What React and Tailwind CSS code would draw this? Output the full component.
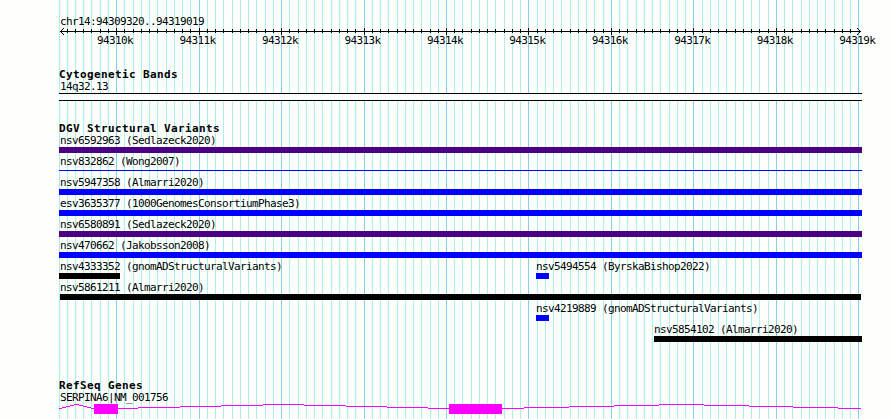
import React from 'react';

const LEFT = 59;
const STEP = 800 / 97;

// one grid line per 100 bp, a major one per 1 kb
const grid = Array.from({ length: 98 }, (_, i) => ({
  x: Math.max(LEFT, Math.floor(58.87 + i * STEP)),
  major: i % 10 === 7,
}));

const scaleLabels = [
  '94310k', '94311k', '94312k', '94313k', '94314k',
  '94315k', '94316k', '94317k', '94318k', '94319k',
];

const INDIGO = 'bg-[#4b0082]';
const BLUE = 'bg-[#0000ff]';
const BLACK = 'bg-black';

const variants = [
  [{ name: 'nsv6592963 (Sedlazeck2020)', start: 59, end: 862, color: INDIGO }],
  [{ name: 'nsv832862 (Wong2007)', start: 59, end: 862, color: BLUE, thin: true }],
  [{ name: 'nsv5947358 (Almarri2020)', start: 59, end: 862, color: BLUE }],
  [{ name: 'esv3635377 (1000GenomesConsortiumPhase3)', start: 59, end: 862, color: BLUE }],
  [{ name: 'nsv6580891 (Sedlazeck2020)', start: 59, end: 862, color: INDIGO }],
  [{ name: 'nsv470662 (Jakobsson2008)', start: 59, end: 862, color: BLUE }],
  [
    { name: 'nsv4333352 (gnomADStructuralVariants)', start: 59, end: 120, color: BLACK },
    { name: 'nsv5494554 (ByrskaBishop2022)', start: 536, end: 549, color: BLUE },
  ],
  [{ name: 'nsv5861211 (Almarri2020)', start: 60, end: 861, color: BLACK }],
  [{ name: 'nsv4219889 (gnomADStructuralVariants)', start: 536, end: 549, color: BLUE }],
  [{ name: 'nsv5854102 (Almarri2020)', start: 654, end: 862, color: BLACK }],
];

// [x1, x2, y] runs of the intron line, y from the top of the gene glyph
const introns = [
  [59, 62, 4], [62, 66, 3], [66, 70, 2], [70, 74, 1], [74, 79, 0],
  [79, 83, 1], [83, 87, 2], [87, 91, 3], [91, 94, 4],
  [118, 138, 4], [138, 180, 3], [180, 221, 2], [221, 263, 1], [263, 304, 0],
  [304, 346, 1], [346, 387, 2], [387, 428, 3], [428, 449, 4],
  [502, 524, 4], [524, 569, 3], [569, 614, 2], [614, 659, 1], [659, 704, 0],
  [704, 749, 1], [749, 793, 2], [793, 838, 3], [838, 861, 4],
];

const exons = [[94, 118], [449, 502]];

const Label = ({ children }) => (
  <div className="h-3 whitespace-pre text-[11px] leading-[12px] tracking-[-0.622px]">{children}</div>
);

const Title = ({ children }) => (
  <h2 className="h-3 whitespace-pre text-[11px] font-bold leading-[12px] tracking-[0.378px]">{children}</h2>
);

const Grid = () => (
  <svg className="absolute inset-0" width="890" height="419" shapeRendering="crispEdges">
    {grid.map((g) => (
      <rect key={g.x} x={g.x} y="0" width="1" height="419" fill={g.major ? '#87ceeb' : '#afeeee'} />
    ))}
  </svg>
);

const Axis = () => (
  <svg className="block" width="890" height="7" shapeRendering="crispEdges">
    <rect x="60" y="3" width="801" height="1" />
    {grid.slice(1, -1).map((g) => (
      <rect key={g.x} x={g.x} y={g.major ? 0 : 1} width="1" height={g.major ? 7 : 4} />
    ))}
    {[1, 2, 3].map((d) => (
      <g key={d}>
        <rect x={60 + d} y={3 - d} width="1" height="1" />
        <rect x={60 + d} y={3 + d} width="1" height="1" />
        <rect x={860 - d} y={3 - d} width="1" height="1" />
        <rect x={860 - d} y={3 + d} width="1" height="1" />
      </g>
    ))}
  </svg>
);

const Feature = ({ feature, offset }) => (
  <div className="w-0 shrink-0" style={{ marginLeft: feature.start - offset }}>
    <div className={`h-[15px] pt-[3px] ${feature.start === LEFT ? 'pl-px' : ''}`}>
      <Label>{feature.name}</Label>
    </div>
    <div
      className={`${feature.thin ? 'mt-[2px] h-px' : 'h-1.5'} ${feature.color}`}
      style={{ width: feature.end - feature.start }}
    />
  </div>
);

const Gene = () => (
  <svg className="block" width="890" height="10" shapeRendering="crispEdges" fill="#ff00ff">
    {introns.map(([x1, x2, y]) => (
      <rect key={x1} x={x1} y={y} width={x2 - x1} height="1" />
    ))}
    {exons.map(([x1, x2]) => (
      <rect key={x1} x={x1} y="0" width={x2 - x1} height="10" />
    ))}
  </svg>
);

const App = () => (
  <div className="relative h-[419px] w-[890px] overflow-hidden bg-[#fdfffc] font-['DejaVu_Sans_Mono',monospace] text-black">
    <Grid />
    <div className="relative flex flex-col">
      <header className="h-[69px] pt-4">
        <div className="pl-[60px]">
          <Label>chr14:94309320..94319019</Label>
        </div>
        <Axis />
        <div className="flex pl-[97px]">
          {scaleLabels.map((label) => (
            <div key={label} className="w-[82.47px] shrink-0">
              <Label>{label}</Label>
            </div>
          ))}
        </div>
      </header>

      <section className="h-[54px] pl-[59px]">
        <Title>Cytogenetic Bands</Title>
        <div className="pl-px">
          <Label>14q32.13</Label>
        </div>
        <div className="h-2 w-[803px] border-y border-black bg-[#fdfffc]" />
      </section>

      <section className="h-[257px]">
        <div className="pl-[59px]">
          <Title>DGV Structural Variants</Title>
        </div>
        <div className="-mt-[3px]">
          {variants.map((row) => (
            <div key={row[0].name} className="flex h-[21px]">
              {row.map((feature, i) => (
                <Feature key={feature.name} feature={feature} offset={i ? row[i - 1].start : 0} />
              ))}
            </div>
          ))}
        </div>
      </section>

      <section>
        <div className="pl-[59px]">
          <Title>RefSeq Genes</Title>
          <div className="pl-px">
            <Label>SERPINA6|NM_001756</Label>
          </div>
        </div>
        <Gene />
      </section>
    </div>
  </div>
);

export default App;
